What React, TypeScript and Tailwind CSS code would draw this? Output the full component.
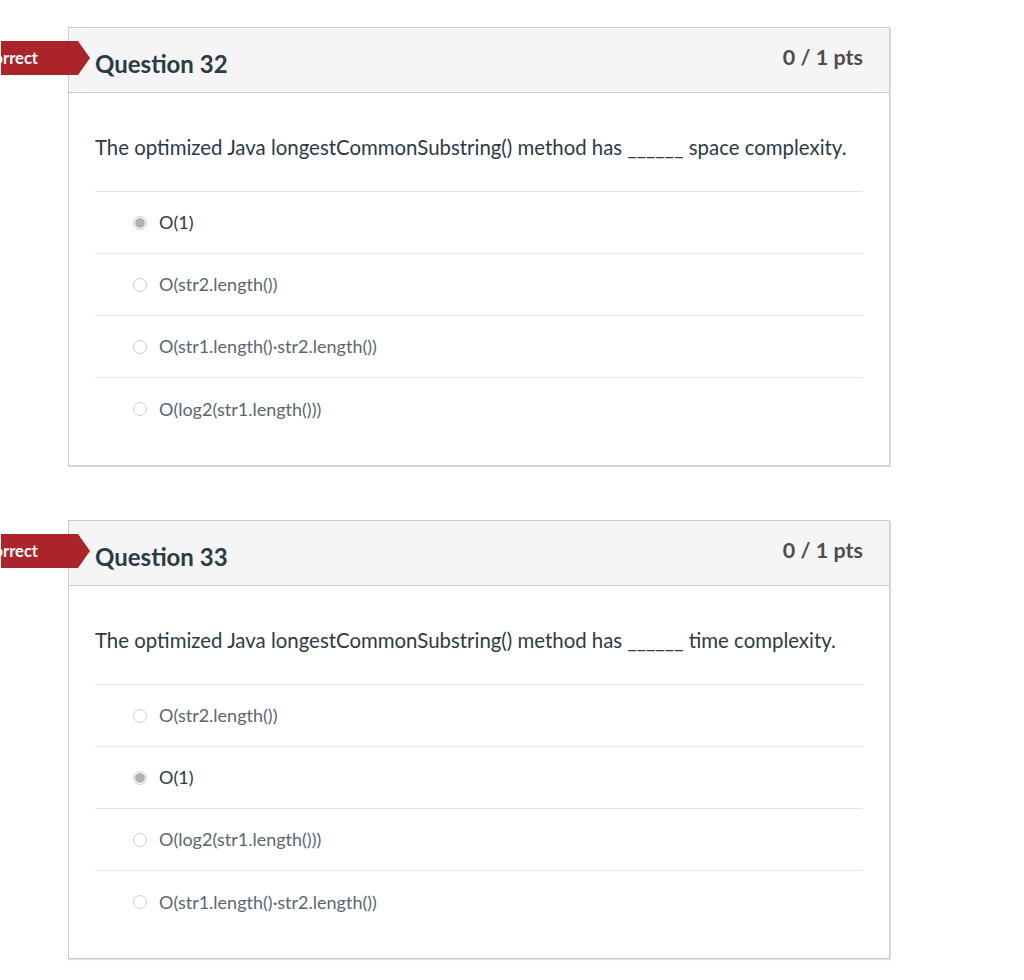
import React from 'react';

type Question = {
    number: number;
    kind: string;
    answers: string[];
    selected: number;
};

const questions: Question[] = [
    {
        number: 32,
        kind: 'space',
        answers: ['O(1)', 'O(str2.length())', 'O(str1.length()·str2.length())', 'O(log2(str1.length()))'],
        selected: 0,
    },
    {
        number: 33,
        kind: 'time',
        answers: ['O(str2.length())', 'O(1)', 'O(log2(str1.length()))', 'O(str1.length()·str2.length())'],
        selected: 1,
    },
];

const Radio: React.FC<{ checked: boolean }> = ({ checked }) => (
    <span className="flex h-[14px] w-[14px] shrink-0 items-center justify-center rounded-full border border-[#d0d0d0] bg-white">
        {checked && <span className="h-[10px] w-[10px] rounded-full bg-[#b3b3b3]" />}
    </span>
);

// the "Incorrect" flag hangs off the left edge of the page
const Ribbon: React.FC = () => (
    <div className="absolute left-[-68px] top-[13px] flex h-[34px] items-center">
        <div className="flex h-full w-[77px] items-center justify-end bg-[#aa242a] pr-[40px] text-[16.5px] font-bold text-white">
            Incorrect
        </div>
        <svg width="12" height="34" viewBox="0 0 12 34" className="block">
            <polygon points="0,0 12,17 0,34" fill="#aa242a" />
        </svg>
    </div>
);

const QuestionCard: React.FC<{ q: Question }> = ({ q }) => (
    <div className="relative w-[822px] border border-[#c7cdd1] bg-white shadow-[1px_1px_1px_rgba(0,0,0,0.12)]">
        <Ribbon />
        <div className="flex h-[65px] justify-between border-b border-[#c7cdd1] bg-[#f5f5f5] px-[26px]">
            <h2 className="pt-[20px] text-[24px] font-bold leading-[32px] text-[#2d3b45]">Question {q.number}</h2>
            <div className="pt-[15px] text-[21.5px] font-bold leading-[28px] text-[#4d4d4d]">0 / 1 pts</div>
        </div>
        <div className="px-[26px] pt-[40px] pb-[25px]">
            <p className="text-[20.4px] leading-[28px] text-[#2d3b45]">
                The optimized Java longestCommonSubstring() method has ______ {q.kind} complexity.
            </p>
            <div className="mt-[30px] border-t border-[#e6e6e6]">
                {q.answers.map((a, i) => (
                    <div
                        key={a}
                        className={`flex h-[62px] items-center gap-[12px] pl-[38px] ${i < q.answers.length - 1 ? 'border-b border-[#e6e6e6]' : ''}`}
                    >
                        <Radio checked={i === q.selected} />
                        <span className={`text-[18px] ${i === q.selected ? 'text-[#2d3b45]' : 'text-[#5b6770]'}`}>{a}</span>
                    </div>
                ))}
            </div>
        </div>
    </div>
);

export default function App() {
    return (
        <div className="min-h-[980px] overflow-hidden bg-white pl-[68px] pt-[27px] font-['Lato','Liberation_Sans',sans-serif]">
            <div className="flex flex-col gap-[54px]">
                {questions.map(q => (
                    <QuestionCard key={q.number} q={q} />
                ))}
            </div>
        </div>
    );
}
